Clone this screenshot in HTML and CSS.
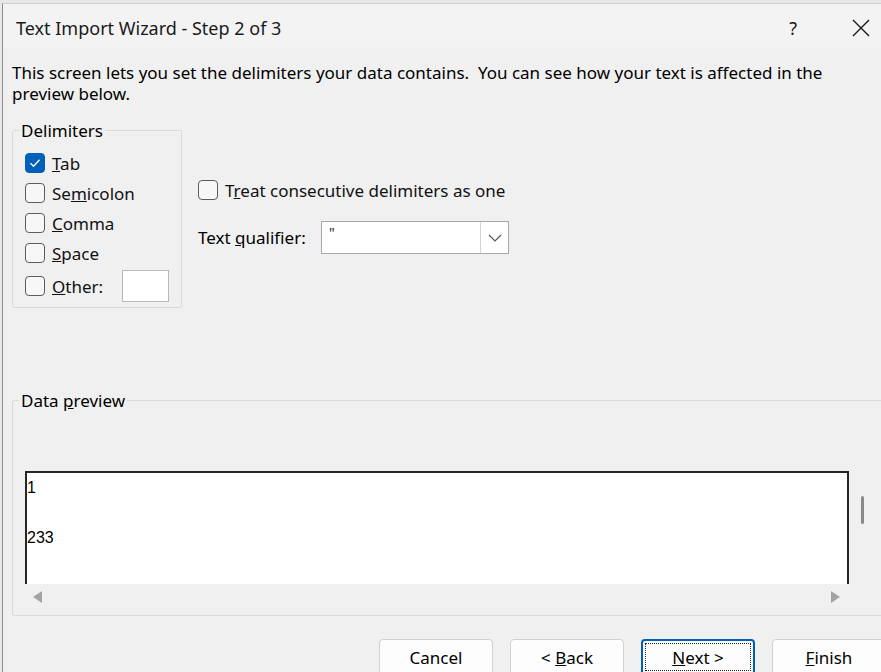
FILE: index.html
```html
<!DOCTYPE html>
<html lang="en">
<head>
    <meta charset="UTF-8">
    <title>Text Import Wizard - Step 2 of 3</title>
    <link rel="stylesheet" href="styles.css">
</head>
<body>
    <div class="window">
        <div class="dialog">
            <div class="titlebar">
                <span class="title">Text Import Wizard - Step 2 of 3</span>
                <span class="help">?</span>
                <svg class="close" width="18" height="18" viewBox="0 0 18 18">
                    <path d="M1 1 L17 17 M17 1 L1 17" stroke="#1a1a1a" stroke-width="1.4" fill="none"/>
                </svg>
            </div>

            <div class="content">
                <p class="intro">This screen lets you set the delimiters your data contains.&nbsp; You can see how your text is affected in the<br>preview below.</p>

                <div class="options">
                    <fieldset class="group delimiters">
                        <legend>Delimiters</legend>
                        <div class="check-row"><span class="box checked"><svg width="14" height="14" viewBox="0 0 14 14"><path d="M2.5 7.2 L5.6 10.2 L11.5 3.8" stroke="#fff" stroke-width="1.3" fill="none"/></svg></span><span><u>T</u>ab</span></div>
                        <div class="check-row"><span class="box"></span><span>Se<u>m</u>icolon</span></div>
                        <div class="check-row"><span class="box"></span><span><u>C</u>omma</span></div>
                        <div class="check-row"><span class="box"></span><span><u>S</u>pace</span></div>
                        <div class="check-row other"><span class="box"></span><span><u>O</u>ther:</span><span class="other-input"></span></div>
                    </fieldset>

                    <div class="side">
                        <div class="check-row"><span class="box"></span><span>T<u>r</u>eat consecutive delimiters as one</span></div>
                        <div class="qualifier">
                            <span class="qualifier-label">Text <u>q</u>ualifier:</span>
                            <div class="combo">
                                <span class="combo-value">"</span>
                                <span class="combo-button">
                                    <svg width="14" height="8" viewBox="0 0 14 8"><path d="M1 1 L7 7 L13 1" stroke="#555" stroke-width="1.2" fill="none"/></svg>
                                </span>
                            </div>
                        </div>
                    </div>
                </div>

                <fieldset class="group preview">
                    <legend>Data <u>p</u>review</legend>
                    <div class="preview-area">
                        <div class="preview-box">
                            <div class="preview-line">1</div>
                            <div class="preview-line"></div>
                            <div class="preview-line">233</div>
                        </div>
                        <div class="vscroll"><span class="thumb"></span></div>
                    </div>
                    <div class="hscroll">
                        <span class="arrow-left"></span>
                        <span class="arrow-right"></span>
                    </div>
                </fieldset>

                <div class="buttons">
                    <button class="btn">Cancel</button>
                    <button class="btn">&lt; <u>B</u>ack</button>
                    <button class="btn default"><span class="focus"><u>N</u>ext &gt;</span></button>
                    <button class="btn"><u>F</u>inish</button>
                </div>
            </div>
        </div>
    </div>
</body>
</html>
```

FILE: styles.css
```css
body {
    margin: 0;
    background: #e8e8e8;
    font-family: "Noto Sans", "Open Sans", sans-serif;
    font-size: 17px;
    color: #111;
}
.window {
    width: 881px;
    height: 672px;
    padding: 3px 0 0 2px;
    box-sizing: border-box;
    overflow: hidden;
}
.dialog {
    height: 100%;
    background: #f0f0f0;
    border-left: 1px solid #8c8c8c;
    border-top: 1px solid #cfcfcf;
    overflow: hidden;
}
.titlebar {
    height: 44px;
    box-sizing: border-box;
    display: flex;
    align-items: center;
    padding: 4px 11px 0 13px;
    background: #f3f3f3;
}
.title {
    font-size: 18px;
    color: #1a1a1a;
}
.help {
    margin-left: auto;
    margin-right: 55px;
    font-size: 18px;
    color: #1a1a1a;
}
.content {
    padding: 0 0 0 9px;
}
.intro {
    margin: 14px 0 0;
    line-height: 21px;
    white-space: nowrap;
    color: #000;
}
.options {
    display: flex;
    margin-top: 16px;
}
.group {
    margin: 0;
    border: 1px solid #dadada;
    border-radius: 2px;
}
.group legend {
    padding: 0 2px;
    margin-left: -6px;
    line-height: 21px;
    color: #000;
}
.delimiters {
    width: 170px;
    box-sizing: border-box;
    padding: 7px 10px 5px 12px;
}
.check-row {
    display: flex;
    align-items: center;
    height: 30px;
    gap: 7px;
    white-space: nowrap;
}
.check-row.other {
    height: 32px;
    margin-top: 2px;
}
.box {
    width: 20px;
    height: 20px;
    box-sizing: border-box;
    border: 1.5px solid #5c5c5c;
    border-radius: 4px;
    background: #f7f7f7;
    display: flex;
    align-items: center;
    justify-content: center;
    flex-shrink: 0;
}
.box.checked {
    background: #005fb8;
    border-color: #005fb8;
}
.other-input {
    width: 47px;
    height: 32px;
    box-sizing: border-box;
    margin-left: 12px;
    background: #fff;
    border: 1px solid #b8b8b8;
}
.side {
    margin-left: 16px;
    padding-top: 55px;
}
.qualifier {
    display: flex;
    align-items: center;
    margin-top: 16px;
}
.qualifier-label {
    width: 123px;
    color: #000;
}
.combo {
    width: 188px;
    height: 33px;
    box-sizing: border-box;
    border: 1px solid #a8a8a8;
    background: #fff;
    display: flex;
}
.combo-value {
    flex: 1;
    padding: 1px 0 0 7px;
    font-size: 14px;
    color: #222;
}
.combo-button {
    width: 27px;
    border-left: 1px solid #d4d4d4;
    display: flex;
    align-items: center;
    justify-content: center;
}
.preview {
    margin-top: 82px;
    margin-right: -20px;
    padding: 60px 0 5px 12px;
}
.preview-area {
    display: flex;
    align-items: flex-start;
}
.preview-box {
    width: 824px;
    height: 113px;
    box-sizing: border-box;
    background: #fff;
    border: 2px solid #262626;
    border-bottom: none;
    padding-top: 2px;
    font-family: "Liberation Sans", Arial, sans-serif;
    font-size: 16px;
    color: #000;
}
.preview-line {
    height: 25px;
    line-height: 25px;
}
.vscroll {
    margin-left: 12px;
    padding-top: 25px;
}
.thumb {
    display: block;
    width: 3px;
    height: 28px;
    border-radius: 2px;
    background: #8a8a8a;
}
.hscroll {
    width: 824px;
    height: 26px;
    display: flex;
    align-items: center;
    justify-content: space-between;
    padding: 0 9px 0 8px;
    box-sizing: border-box;
}
.arrow-left {
    width: 0;
    height: 0;
    border-top: 6px solid transparent;
    border-bottom: 6px solid transparent;
    border-right: 9px solid #a3a3a3;
}
.arrow-right {
    width: 0;
    height: 0;
    border-top: 6px solid transparent;
    border-bottom: 6px solid transparent;
    border-left: 9px solid #a3a3a3;
}
.buttons {
    display: flex;
    justify-content: flex-end;
    gap: 17px;
    margin-top: 23px;
    margin-right: -5px;
}
.btn {
    width: 114px;
    height: 36px;
    background: #fdfdfd;
    border: 1px solid #d0d0d0;
    border-radius: 4px;
    font-family: "Noto Sans", "Open Sans", sans-serif;
    font-size: 17px;
    color: #000;
    padding: 0;
}
.btn.default {
    border: 2px solid #005fb8;
    padding: 2px;
}
.focus {
    display: flex;
    align-items: center;
    justify-content: center;
    height: 100%;
    box-sizing: border-box;
    border: 1px dotted #222;
}
```
